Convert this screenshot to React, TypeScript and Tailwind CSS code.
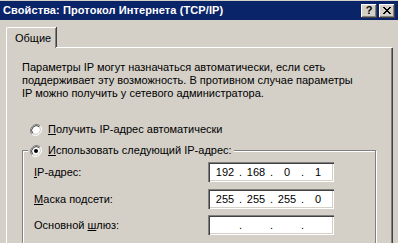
const sunken =
  'bg-white shadow-[inset_1px_1px_#808080,inset_2px_2px_#404040,inset_-1px_-1px_#ffffff,inset_-2px_-2px_#d4d0c8]';
const raised =
  'bg-[#d4d0c8] shadow-[inset_-1px_-1px_#404040,inset_1px_1px_#ffffff,inset_-2px_-2px_#808080,inset_2px_2px_#d4d0c8]';

function Radio({ checked }: { checked?: boolean }) {
  return (
    <svg width="12" height="12" viewBox="0 0 12 12" className="shrink-0">
      <path d="M10.2 1.8 A6 6 0 0 0 1.8 10.2" fill="none" stroke="#808080" strokeWidth="1" />
      <path d="M1.8 10.2 A6 6 0 0 0 10.2 1.8" fill="none" stroke="#ffffff" strokeWidth="1" />
      <circle cx="6" cy="6" r="4.5" fill="#ffffff" />
      <path d="M9.3 2.7 A4.7 4.7 0 0 0 2.7 9.3" fill="none" stroke="#404040" strokeWidth="1" />
      <path d="M2.7 9.3 A4.7 4.7 0 0 0 9.3 2.7" fill="none" stroke="#d4d0c8" strokeWidth="1" />
      {checked && <circle cx="6" cy="6" r="2" fill="#000000" />}
    </svg>
  );
}

function IpBox({ parts }: { parts: string[] }) {
  return (
    <div className={`w-[126px] h-[20px] flex items-center pl-[4px] ${sunken}`}>
      {parts.map((p, i) => (
        <div key={i} className="flex items-center">
          <span className="w-[26px] text-center">{p}</span>
          {i < 3 && <span className="w-[5px] text-center">.</span>}
        </div>
      ))}
    </div>
  );
}

function Row({ label, parts }: { label: React.ReactNode; parts: string[] }) {
  return (
    <div className="flex items-center h-[20px]">
      <div className="w-[174px]">{label}</div>
      <IpBox parts={parts} />
    </div>
  );
}

export default function App() {
  return (
    <div className="w-[398px] h-[243px] overflow-hidden bg-[#d4d0c8] text-[11px] leading-[13px] text-black font-['Tahoma','Liberation_Sans',sans-serif]">
      {/* title bar */}
      <div className="h-[20px] border-t border-[#d4d0c8] bg-[#0a246a] flex items-center pl-[3px] pr-[3px]">
        <span className="font-bold text-white whitespace-nowrap tracking-[0.1px]">Свойства: Протокол Интернета (TCP/IP)</span>
        <div className="ml-auto flex gap-[2px]">
          <div className={`w-[16px] h-[14px] flex items-center justify-center font-bold text-[11px] leading-none ${raised}`}>?</div>
          <div className={`w-[16px] h-[14px] flex items-center justify-center ${raised}`}>
            <svg width="8" height="7" viewBox="0 0 8 7">
              <path d="M0 0 L7 7 M1 0 L8 7 M7 0 L0 7 M8 0 L1 7" stroke="#000" strokeWidth="1" />
            </svg>
          </div>
        </div>
      </div>

      <div className="pl-[6px] pr-[6px]">
        {/* tabs */}
        <div className="flex items-end mt-[7px]">
          <div className="w-[50px] h-[21px] border-l border-t border-white rounded-tl-[2px] shadow-[inset_-1px_0_#808080,1px_0_#404040] pl-[8px] pt-[4px]">
            Общие
          </div>
          <div className="flex-1 border-b border-white" />
        </div>

        {/* panel */}
        <div className="h-[200px] border-l border-white shadow-[inset_-1px_0_#808080,1px_0_#404040] pl-[15px] pr-[16px] pt-[13px]">
          <p className="whitespace-nowrap">
            Параметры IP могут назначаться автоматически, если сеть
            <br />
            поддерживает эту возможность. В противном случае параметры
            <br />
            IP можно получить у сетевого администратора.
          </p>

          <div className="flex items-center gap-[6px] mt-[23px] ml-[8px]">
            <Radio />
            <span>
              <u>П</u>олучить IP-адрес автоматически
            </span>
          </div>

          <fieldset className="mt-[8px] border border-[#808080] shadow-[inset_1px_1px_#ffffff,1px_1px_#ffffff] pl-[11px] pb-[10px] flex flex-col gap-[6px]">
            <legend className="-ml-[6px] px-[2px] bg-[#d4d0c8] flex items-center gap-[6px]">
              <Radio checked />
              <span>
                <u>И</u>спользовать следующий IP-адрес:
              </span>
            </legend>
            <div className="mt-[5px]">
              <Row
                label={
                  <span>
                    <u>I</u>P-адрес:
                  </span>
                }
                parts={['192', '168', '0', '1']}
              />
            </div>
            <div className="mt-[1px]">
              <Row
                label={
                  <span>
                    <u>М</u>аска подсети:
                  </span>
                }
                parts={['255', '255', '255', '0']}
              />
            </div>
            <Row
              label={
                <span>
                  Основной <u>ш</u>люз:
                </span>
              }
              parts={['', '', '', '']}
            />
          </fieldset>
        </div>
      </div>
    </div>
  );
}
